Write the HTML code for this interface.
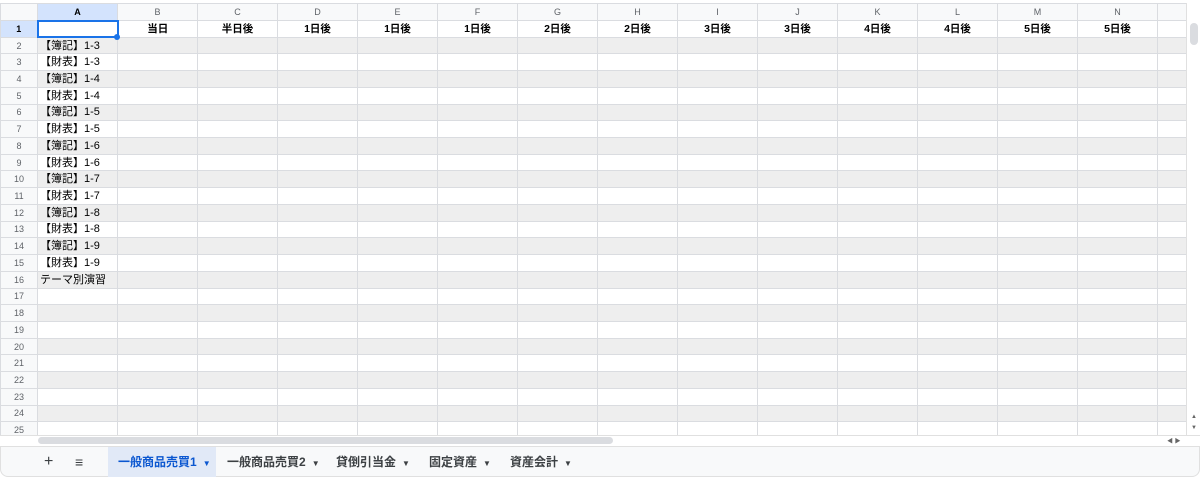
<!DOCTYPE html>
<html><head><meta charset="utf-8"><style>
*{margin:0;padding:0;box-sizing:border-box}
body{width:1200px;height:477px;overflow:hidden;background:#fff;font-family:"Liberation Sans","Noto Sans CJK JP",sans-serif;position:relative}
#grid{position:absolute;left:0;top:3px;border-collapse:collapse;table-layout:fixed}
#grid td{border:1px solid #dadce0;height:16.72px;font-size:11px;color:#000;padding:0 2px;white-space:nowrap;overflow:hidden;line-height:14px}
#grid tr.h td{height:17px;font-size:9px;color:#5f6368;text-align:center;background:#f8f9fa}
#grid td.rh{text-align:center;font-size:9px;color:#5f6368;background:#f8f9fa;padding:0}
#grid tr.g td{background:#eeeeee}
#grid tr.g td.rh{background:#f8f9fa}
#grid tr.r1 td{text-align:center;font-weight:bold;font-size:10.5px}
#grid tr.r1 td.rh{background:#d3e3fd;color:#000;font-weight:bold;font-size:9px}
#grid tr.h td.sel{background:#d3e3fd;color:#000;font-weight:bold}
.vs{position:absolute;left:1186px;top:3px;width:14px;height:432px;background:#fff;border-left:1px solid #e0e0e0}
.vs div{position:absolute;left:3px;top:20px;width:8px;height:22px;border-radius:4px;background:#dadce0}
.hs{position:absolute;left:0;top:435px;width:1200px;height:11px;background:#fff;border-top:1px solid #e0e0e0}
.hs div{position:absolute;left:38px;top:1px;width:575px;height:7px;border-radius:4px;background:#dadce0}
.tabs{position:absolute;left:0;top:446px;width:1200px;height:31px;background:#f8f9fa;border-radius:0 0 8px 8px;border:1px solid #e0e0e0}
.tab{position:absolute;top:0;height:30px;line-height:30px;font-size:12px;color:#3c4043;font-weight:bold}
.tab.act{background:#e1e9f7;color:#0b57d0}
.ar{font-size:8px;margin-left:6px}
</style></head><body>
<table id="grid">
<colgroup><col style="width:37px"><col style="width:80px"><col style="width:80px"><col style="width:80px"><col style="width:80px"><col style="width:80px"><col style="width:80px"><col style="width:80px"><col style="width:80px"><col style="width:80px"><col style="width:80px"><col style="width:80px"><col style="width:80px"><col style="width:80px"><col style="width:80px"><col style="width:30px"></colgroup>
<tr class="h"><td></td><td class="sel">A</td><td>B</td><td>C</td><td>D</td><td>E</td><td>F</td><td>G</td><td>H</td><td>I</td><td>J</td><td>K</td><td>L</td><td>M</td><td>N</td><td></td></tr>
<tr class="r1"><td class="rh">1</td><td style="border:2px solid #1a73e8"></td><td>当日</td><td>半日後</td><td>1日後</td><td>1日後</td><td>1日後</td><td>2日後</td><td>2日後</td><td>3日後</td><td>3日後</td><td>4日後</td><td>4日後</td><td>5日後</td><td>5日後</td><td></td></tr>
<tr class="g"><td class="rh">2</td><td>【簿記】1-3</td><td></td><td></td><td></td><td></td><td></td><td></td><td></td><td></td><td></td><td></td><td></td><td></td><td></td><td></td></tr>
<tr><td class="rh">3</td><td>【財表】1-3</td><td></td><td></td><td></td><td></td><td></td><td></td><td></td><td></td><td></td><td></td><td></td><td></td><td></td><td></td></tr>
<tr class="g"><td class="rh">4</td><td>【簿記】1-4</td><td></td><td></td><td></td><td></td><td></td><td></td><td></td><td></td><td></td><td></td><td></td><td></td><td></td><td></td></tr>
<tr><td class="rh">5</td><td>【財表】1-4</td><td></td><td></td><td></td><td></td><td></td><td></td><td></td><td></td><td></td><td></td><td></td><td></td><td></td><td></td></tr>
<tr class="g"><td class="rh">6</td><td>【簿記】1-5</td><td></td><td></td><td></td><td></td><td></td><td></td><td></td><td></td><td></td><td></td><td></td><td></td><td></td><td></td></tr>
<tr><td class="rh">7</td><td>【財表】1-5</td><td></td><td></td><td></td><td></td><td></td><td></td><td></td><td></td><td></td><td></td><td></td><td></td><td></td><td></td></tr>
<tr class="g"><td class="rh">8</td><td>【簿記】1-6</td><td></td><td></td><td></td><td></td><td></td><td></td><td></td><td></td><td></td><td></td><td></td><td></td><td></td><td></td></tr>
<tr><td class="rh">9</td><td>【財表】1-6</td><td></td><td></td><td></td><td></td><td></td><td></td><td></td><td></td><td></td><td></td><td></td><td></td><td></td><td></td></tr>
<tr class="g"><td class="rh">10</td><td>【簿記】1-7</td><td></td><td></td><td></td><td></td><td></td><td></td><td></td><td></td><td></td><td></td><td></td><td></td><td></td><td></td></tr>
<tr><td class="rh">11</td><td>【財表】1-7</td><td></td><td></td><td></td><td></td><td></td><td></td><td></td><td></td><td></td><td></td><td></td><td></td><td></td><td></td></tr>
<tr class="g"><td class="rh">12</td><td>【簿記】1-8</td><td></td><td></td><td></td><td></td><td></td><td></td><td></td><td></td><td></td><td></td><td></td><td></td><td></td><td></td></tr>
<tr><td class="rh">13</td><td>【財表】1-8</td><td></td><td></td><td></td><td></td><td></td><td></td><td></td><td></td><td></td><td></td><td></td><td></td><td></td><td></td></tr>
<tr class="g"><td class="rh">14</td><td>【簿記】1-9</td><td></td><td></td><td></td><td></td><td></td><td></td><td></td><td></td><td></td><td></td><td></td><td></td><td></td><td></td></tr>
<tr><td class="rh">15</td><td>【財表】1-9</td><td></td><td></td><td></td><td></td><td></td><td></td><td></td><td></td><td></td><td></td><td></td><td></td><td></td><td></td></tr>
<tr class="g"><td class="rh">16</td><td style="overflow:visible">テーマ別演習</td><td></td><td></td><td></td><td></td><td></td><td></td><td></td><td></td><td></td><td></td><td></td><td></td><td></td><td></td></tr>
<tr><td class="rh">17</td><td></td><td></td><td></td><td></td><td></td><td></td><td></td><td></td><td></td><td></td><td></td><td></td><td></td><td></td><td></td></tr>
<tr class="g"><td class="rh">18</td><td></td><td></td><td></td><td></td><td></td><td></td><td></td><td></td><td></td><td></td><td></td><td></td><td></td><td></td><td></td></tr>
<tr><td class="rh">19</td><td></td><td></td><td></td><td></td><td></td><td></td><td></td><td></td><td></td><td></td><td></td><td></td><td></td><td></td><td></td></tr>
<tr class="g"><td class="rh">20</td><td></td><td></td><td></td><td></td><td></td><td></td><td></td><td></td><td></td><td></td><td></td><td></td><td></td><td></td><td></td></tr>
<tr><td class="rh">21</td><td></td><td></td><td></td><td></td><td></td><td></td><td></td><td></td><td></td><td></td><td></td><td></td><td></td><td></td><td></td></tr>
<tr class="g"><td class="rh">22</td><td></td><td></td><td></td><td></td><td></td><td></td><td></td><td></td><td></td><td></td><td></td><td></td><td></td><td></td><td></td></tr>
<tr><td class="rh">23</td><td></td><td></td><td></td><td></td><td></td><td></td><td></td><td></td><td></td><td></td><td></td><td></td><td></td><td></td><td></td></tr>
<tr class="g"><td class="rh">24</td><td></td><td></td><td></td><td></td><td></td><td></td><td></td><td></td><td></td><td></td><td></td><td></td><td></td><td></td><td></td></tr>
<tr><td class="rh">25</td><td></td><td></td><td></td><td></td><td></td><td></td><td></td><td></td><td></td><td></td><td></td><td></td><td></td><td></td><td></td></tr>
</table>
<div style="position:absolute;left:114px;top:34px;width:6px;height:6px;border-radius:50%;background:#1a73e8"></div>
<div class="vs"><div></div><span style="position:absolute;left:4px;top:411px;font-size:6px;color:#666">▲</span><span style="position:absolute;left:4px;top:422px;font-size:6px;color:#666">▼</span></div>
<div class="hs"><div></div><span style="position:absolute;left:1167px;top:0;font-size:6px;color:#666">◀ ▶</span></div>
<div class="tabs">
<div class="tab" style="left:43px;font-weight:normal;font-size:16px">+</div>
<div class="tab" style="left:74px;font-weight:normal;font-size:14px">≡</div>
<div class="tab act" style="left:107px;width:108px;padding-left:10px">一般商品売買1<span class="ar">▼</span></div>
<div class="tab" style="left:226px">一般商品売買2<span class="ar">▼</span></div>
<div class="tab" style="left:335px">貸倒引当金<span class="ar">▼</span></div>
<div class="tab" style="left:428px">固定資産<span class="ar">▼</span></div>
<div class="tab" style="left:509px">資産会計<span class="ar">▼</span></div>
</div>
</body></html>
